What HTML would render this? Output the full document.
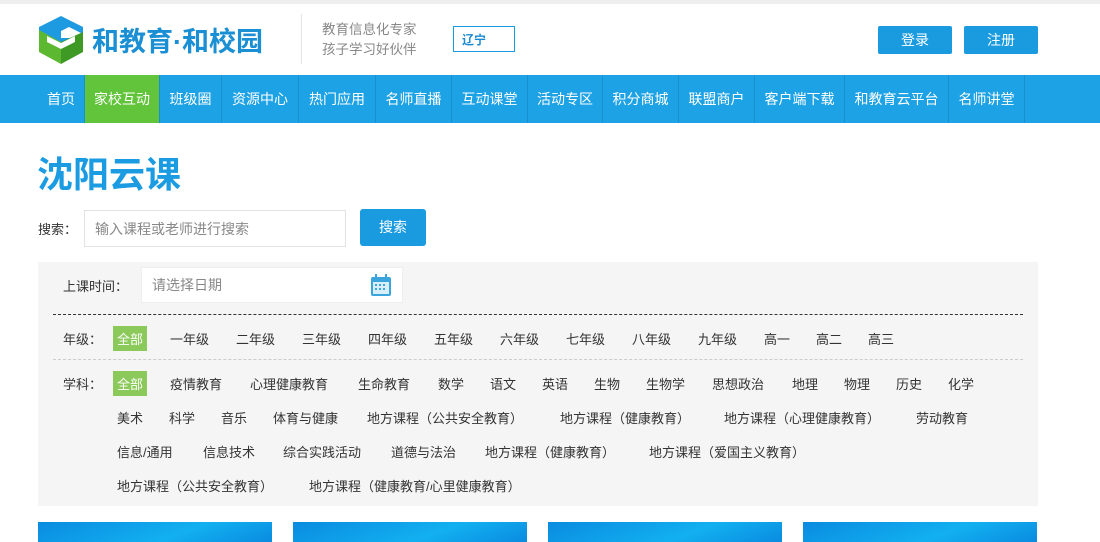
<!DOCTYPE html><html><head><meta charset="utf-8"><style>
*{margin:0;padding:0;box-sizing:border-box}
body{width:1100px;height:542px;overflow:hidden;background:#fff;font-family:"Liberation Sans","Noto Sans CJK SC",sans-serif;font-size:13px;color:#333;position:relative}
.a{position:absolute;white-space:nowrap}
.nav{position:absolute;top:75px;left:0;width:1100px;height:48px;background:#1da2e6}
.nav span{position:absolute;top:0;height:48px;line-height:48px;color:#fff;font-size:14px;text-align:center;border-right:1px solid #1890cf}
.btn{position:absolute;top:26px;width:74px;height:28px;background:#1a9be0;color:#fff;text-align:center;line-height:28px;font-size:14px;border-radius:2px}
.sel{background:#8bc95a;color:#fff;padding:2px 4px}
</style></head><body>
<div class="a" style="top:0;left:0;width:1100px;height:4px;background:#eee"></div>
<svg class="a" style="left:37px;top:16px" width="48" height="48" viewBox="0 0 48 48"><polygon points="24,0 46,11 46,18 32,11 24,15 24,22 38,22 46,26 24,38 2,26 2,11" fill="#1e9be0"/><polygon points="2,14 24,26 24,48 2,36" fill="#5cb830"/><polygon points="24,26 46,16 46,36 24,48" fill="#3e9a24"/><polygon points="10,20 24,27 38,20 38,26 24,33 10,26" fill="#fff"/></svg>
<div class="a" style="left:92px;top:20px;font-size:27px;font-weight:bold;color:#1b8fd4;letter-spacing:0">和教育·和校园</div>
<div class="a" style="left:301px;top:14px;width:1px;height:50px;background:#e5e5e5"></div>
<div class="a" style="left:322px;top:20px;font-size:13.5px;color:#888;line-height:20px">教育信息化专家<br>孩子学习好伙伴</div>
<div class="a" style="left:453px;top:26px;width:62px;height:26px;border:1px solid #1a9be0;color:#1a8ad0;font-size:12px;padding:4px 8px;font-weight:bold">辽宁</div>
<div class="btn" style="left:878px">登录</div><div class="btn" style="left:964px">注册</div>
<div class="nav">
<span style="left:38px;width:47px">首页</span>
<span style="left:85px;width:75px;background:#62c43a">家校互动</span>
<span style="left:160px;width:62px">班级圈</span>
<span style="left:222px;width:77px">资源中心</span>
<span style="left:299px;width:77px">热门应用</span>
<span style="left:376px;width:76px">名师直播</span>
<span style="left:452px;width:76px">互动课堂</span>
<span style="left:528px;width:75px">活动专区</span>
<span style="left:603px;width:76px">积分商城</span>
<span style="left:679px;width:76px">联盟商户</span>
<span style="left:755px;width:90px">客户端下载</span>
<span style="left:845px;width:104px">和教育云平台</span>
<span style="left:949px;width:76px">名师讲堂</span>
</div>
<div class="a" style="left:37px;top:146px;font-size:36px;font-weight:bold;color:#1b9ce2">沈阳云课</div>
<div class="a" style="left:38px;top:219px">搜索：</div>
<div class="a" style="left:84px;top:210px;width:262px;height:37px;border:1px solid #e2e2e2;color:#888;font-size:14px;padding:8px 10px">输入课程或老师进行搜索</div>
<div class="a" style="left:360px;top:209px;width:66px;height:37px;background:#1a9be0;color:#fff;text-align:center;line-height:37px;font-size:14px;border-radius:3px">搜索</div>
<div class="a" style="left:38px;top:262px;width:1000px;height:244px;background:#f5f5f5"></div>
<div class="a" style="left:63px;top:276px">上课时间：</div>
<div class="a" style="left:141px;top:267px;width:262px;height:36px;background:#fff;border:1px solid #eee;color:#888;font-size:14px;padding:7px 10px">请选择日期</div>
<svg class="a" style="left:370px;top:273px" width="22" height="24"><rect x="1" y="4" width="20" height="19" rx="2" fill="#3aa4dc"/><rect x="3" y="9" width="16" height="12" fill="#d8eefa"/><rect x="5" y="1" width="2" height="5" fill="#3aa4dc"/><rect x="15" y="1" width="2" height="5" fill="#3aa4dc"/><g fill="#3aa4dc"><rect x="5" y="11" width="2" height="2"/><rect x="9" y="11" width="2" height="2"/><rect x="13" y="11" width="2" height="2"/><rect x="5" y="15" width="2" height="2"/><rect x="9" y="15" width="2" height="2"/><rect x="13" y="15" width="2" height="2"/></g></svg>
<div class="a" style="left:53px;top:314px;width:970px;border-top:1px dashed #333"></div>
<div class="a" style="left:53px;top:359px;width:970px;border-top:1px dashed #ccc"></div>
<div class="a" style="left:63px;top:329px">年级：</div>
<div class="a sel" style="left:113px;top:326px;padding:3px 4px">全部</div>
<div class="a" style="top:329px;left:170px">一年级</div><div class="a" style="top:329px;left:236px">二年级</div><div class="a" style="top:329px;left:302px">三年级</div><div class="a" style="top:329px;left:368px">四年级</div><div class="a" style="top:329px;left:434px">五年级</div><div class="a" style="top:329px;left:500px">六年级</div><div class="a" style="top:329px;left:566px">七年级</div><div class="a" style="top:329px;left:632px">八年级</div><div class="a" style="top:329px;left:698px">九年级</div><div class="a" style="top:329px;left:764px">高一</div><div class="a" style="top:329px;left:816px">高二</div><div class="a" style="top:329px;left:868px">高三</div>
<div class="a" style="left:63px;top:374px">学科：</div>
<div class="a sel" style="left:113px;top:371px;padding:3px 4px">全部</div>
<div class="a" style="top:374px;left:170px">疫情教育</div><div class="a" style="top:374px;left:250px">心理健康教育</div><div class="a" style="top:374px;left:358px">生命教育</div><div class="a" style="top:374px;left:438px">数学</div><div class="a" style="top:374px;left:490px">语文</div><div class="a" style="top:374px;left:542px">英语</div><div class="a" style="top:374px;left:594px">生物</div><div class="a" style="top:374px;left:646px">生物学</div><div class="a" style="top:374px;left:712px">思想政治</div><div class="a" style="top:374px;left:792px">地理</div><div class="a" style="top:374px;left:844px">物理</div><div class="a" style="top:374px;left:896px">历史</div><div class="a" style="top:374px;left:948px">化学</div>
<div class="a" style="top:408px;left:117px">美术</div><div class="a" style="top:408px;left:169px">科学</div><div class="a" style="top:408px;left:221px">音乐</div><div class="a" style="top:408px;left:273px">体育与健康</div><div class="a" style="top:408px;left:367px">地方课程（公共安全教育）</div><div class="a" style="top:408px;left:560px">地方课程（健康教育）</div><div class="a" style="top:408px;left:724px">地方课程（心理健康教育）</div><div class="a" style="top:408px;left:916px">劳动教育</div>
<div class="a" style="top:442px;left:117px">信息/通用</div><div class="a" style="top:442px;left:203px">信息技术</div><div class="a" style="top:442px;left:283px">综合实践活动</div><div class="a" style="top:442px;left:391px">道德与法治</div><div class="a" style="top:442px;left:485px">地方课程（健康教育）</div><div class="a" style="top:442px;left:649px">地方课程（爱国主义教育）</div>
<div class="a" style="top:476px;left:117px">地方课程（公共安全教育）</div><div class="a" style="top:476px;left:309px">地方课程（健康教育/心里健康教育）</div>
<div class="a" style="left:38px;top:522px;width:234px;height:20px;background:linear-gradient(160deg,#0a8be0,#12b0f0 60%,#0a8be0)"></div>
<div class="a" style="left:293px;top:522px;width:234px;height:20px;background:linear-gradient(160deg,#0a8be0,#12b0f0 60%,#0a8be0)"></div>
<div class="a" style="left:548px;top:522px;width:234px;height:20px;background:linear-gradient(160deg,#0a8be0,#12b0f0 60%,#0a8be0)"></div>
<div class="a" style="left:803px;top:522px;width:234px;height:20px;background:linear-gradient(160deg,#0a8be0,#12b0f0 60%,#0a8be0)"></div>
</body></html>
